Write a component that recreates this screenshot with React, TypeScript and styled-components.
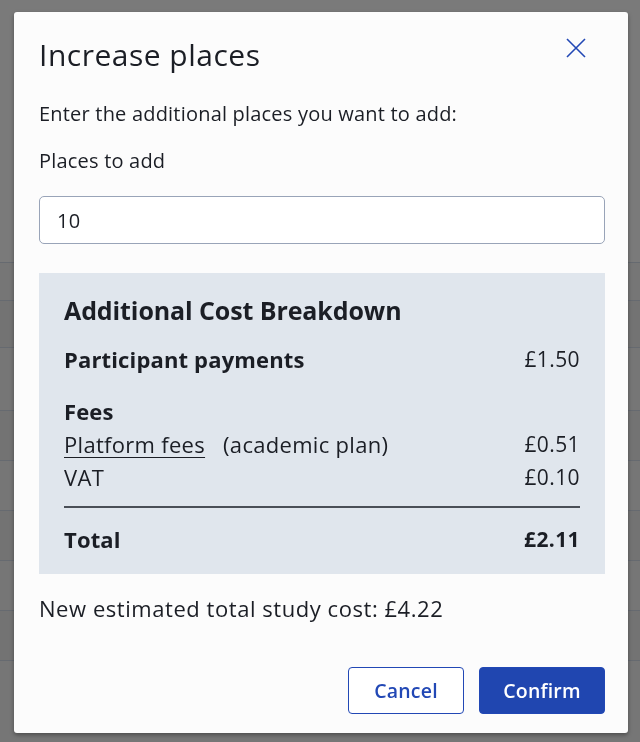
import React from "react";
import styled, { createGlobalStyle } from "styled-components";

const Global = createGlobalStyle`
  html, body { margin: 0; padding: 0; }
  body {
    background: #767676;
    font-family: "Open Sans", "Noto Sans", "Liberation Sans", sans-serif;
    color: #1b1e25;
    -webkit-font-smoothing: antialiased;
  }
  * { box-sizing: border-box; }
`;

const Page = styled.div`
  width: 640px;
  height: 742px;
  overflow: hidden;
  display: flex;
  flex-direction: column;
`;

const PageHeader = styled.div`
  height: 262px;
  background: #7a7a7a;
`;

const PageRow = styled.div<{ $h: number; $shade?: boolean }>`
  height: ${(p) => p.$h}px;
  border-top: 1px solid #666a70;
  background: ${(p) => (p.$shade ? "#737373" : "#767676")};
`;

const Overlay = styled.div`
  position: fixed;
  inset: 0;
  display: flex;
  align-items: flex-start;
  justify-content: flex-start;
`;

const Modal = styled.div`
  margin: 12px 0 0 14px;
  width: 614px;
  height: 721px;
  background: #fcfcfc;
  border-radius: 3px;
  box-shadow: 0 2px 4px rgba(0, 0, 0, 0.35);
  padding: 25px 23px 19px 25px;
  display: flex;
  flex-direction: column;
`;

const Header = styled.div`
  display: flex;
  align-items: flex-start;
  justify-content: space-between;
`;

const Title = styled.h2`
  margin: 0;
  font-size: 30px;
  line-height: 36px;
  font-weight: 500;
  letter-spacing: 0.5px;
`;

const CloseButton = styled.button`
  border: 0;
  background: transparent;
  padding: 0;
  margin: 1px 19px 0 0;
  width: 20px;
  height: 20px;
  display: flex;
  align-items: center;
  justify-content: center;
  cursor: pointer;
  color: #2248b5;
`;

const Text = styled.p<{ $top: number }>`
  margin: ${(p) => p.$top}px 0 0;
  font-size: 20px;
  line-height: 26px;
  letter-spacing: 0.2px;
`;

const Input = styled.input`
  margin-top: 22px;
  height: 48px;
  width: 100%;
  border: 1px solid #99a4b8;
  border-radius: 5px;
  background: #fff;
  padding: 0 17px;
  font-family: inherit;
  font-size: 20px;
  letter-spacing: 0.2px;
  color: #1b1e25;
  outline: none;
`;

const Breakdown = styled.section`
  margin-top: 29px;
  background: #e0e6ed;
  padding: 22px 25px 19px;
  display: flex;
  flex-direction: column;
`;

const BreakdownTitle = styled.h3`
  margin: 0 0 17px;
  font-size: 25px;
  line-height: 30px;
  font-weight: 700;
  letter-spacing: -0.1px;
`;

const Row = styled.div<{ $bold?: boolean }>`
  display: flex;
  justify-content: space-between;
  align-items: center;
  height: 33px;
  font-size: 22px;
  font-weight: ${(p) => (p.$bold ? 700 : 400)};
  letter-spacing: ${(p) => (p.$bold ? "0.15px" : "0.3px")};
`;

const Amount = styled.span<{ $bold?: boolean }>`
  font-size: 21px;
  letter-spacing: 0.4px;
  font-weight: ${(p) => (p.$bold ? 700 : 400)};
`;

const Group = styled.div`
  margin-top: 19px;
  display: flex;
  flex-direction: column;
`;

const LinkText = styled.a`
  color: inherit;
  text-decoration: underline;
  text-underline-offset: 4px;
  text-decoration-thickness: 1px;
`;

const Note = styled.span`
  margin-left: 18px;
`;

const Divider = styled.hr`
  margin: 13px 0 14px;
  border: 0;
  height: 2px;
  background: #4a4f57;
`;

const Summary = styled.p`
  margin: 20px 0 0;
  font-size: 22px;
  line-height: 28px;
  font-weight: 500;
  letter-spacing: 0.55px;
`;

const Actions = styled.div`
  margin-top: auto;
  display: flex;
  justify-content: flex-end;
  gap: 15px;
`;

const Button = styled.button<{ $primary?: boolean; $w: number }>`
  width: ${(p) => p.$w}px;
  height: 47px;
  border-radius: 4px;
  border: 1px solid #2248b5;
  background: ${(p) => (p.$primary ? "#2046b0" : "#fff")};
  color: ${(p) => (p.$primary ? "#fff" : "#2248b5")};
  font-family: inherit;
  font-size: 19.5px;
  font-weight: 600;
  letter-spacing: 0.2px;
  cursor: pointer;
`;

export default function App() {
  return (
    <>
      <Global />
      <Page>
        <PageHeader />
        <PageRow $h={38} />
        <PageRow $h={47} $shade />
        <PageRow $h={63} />
        <PageRow $h={50} $shade />
        <PageRow $h={50} />
        <PageRow $h={50} $shade />
        <PageRow $h={50} />
        <PageRow $h={50} $shade />
        <PageRow $h={50} />
      </Page>
      <Overlay>
        <Modal role="dialog" aria-labelledby="title">
          <Header>
            <Title id="title">Increase places</Title>
            <CloseButton aria-label="Close">
              <svg width="20" height="20" viewBox="0 0 20 20" fill="none">
                <path d="M1 1L19 19M19 1L1 19" stroke="currentColor" strokeWidth="1.6" />
              </svg>
            </CloseButton>
          </Header>
          <Text $top={28}>Enter the additional places you want to add:</Text>
          <Text $top={21}>Places to add</Text>
          <Input defaultValue="10" />
          <Breakdown>
            <BreakdownTitle>Additional Cost Breakdown</BreakdownTitle>
            <Row $bold>
              <span>Participant payments</span>
              <Amount>£1.50</Amount>
            </Row>
            <Group>
              <Row $bold>
                <span>Fees</span>
              </Row>
              <Row>
                <span>
                  <LinkText href="#">Platform fees</LinkText>
                  <Note>(academic plan)</Note>
                </span>
                <Amount>£0.51</Amount>
              </Row>
              <Row>
                <span>VAT</span>
                <Amount>£0.10</Amount>
              </Row>
            </Group>
            <Divider />
            <Row $bold>
              <span>Total</span>
              <Amount $bold>£2.11</Amount>
            </Row>
          </Breakdown>
          <Summary>New estimated total study cost: £4.22</Summary>
          <Actions>
            <Button $w={116}>Cancel</Button>
            <Button $primary $w={126}>Confirm</Button>
          </Actions>
        </Modal>
      </Overlay>
    </>
  );
}
